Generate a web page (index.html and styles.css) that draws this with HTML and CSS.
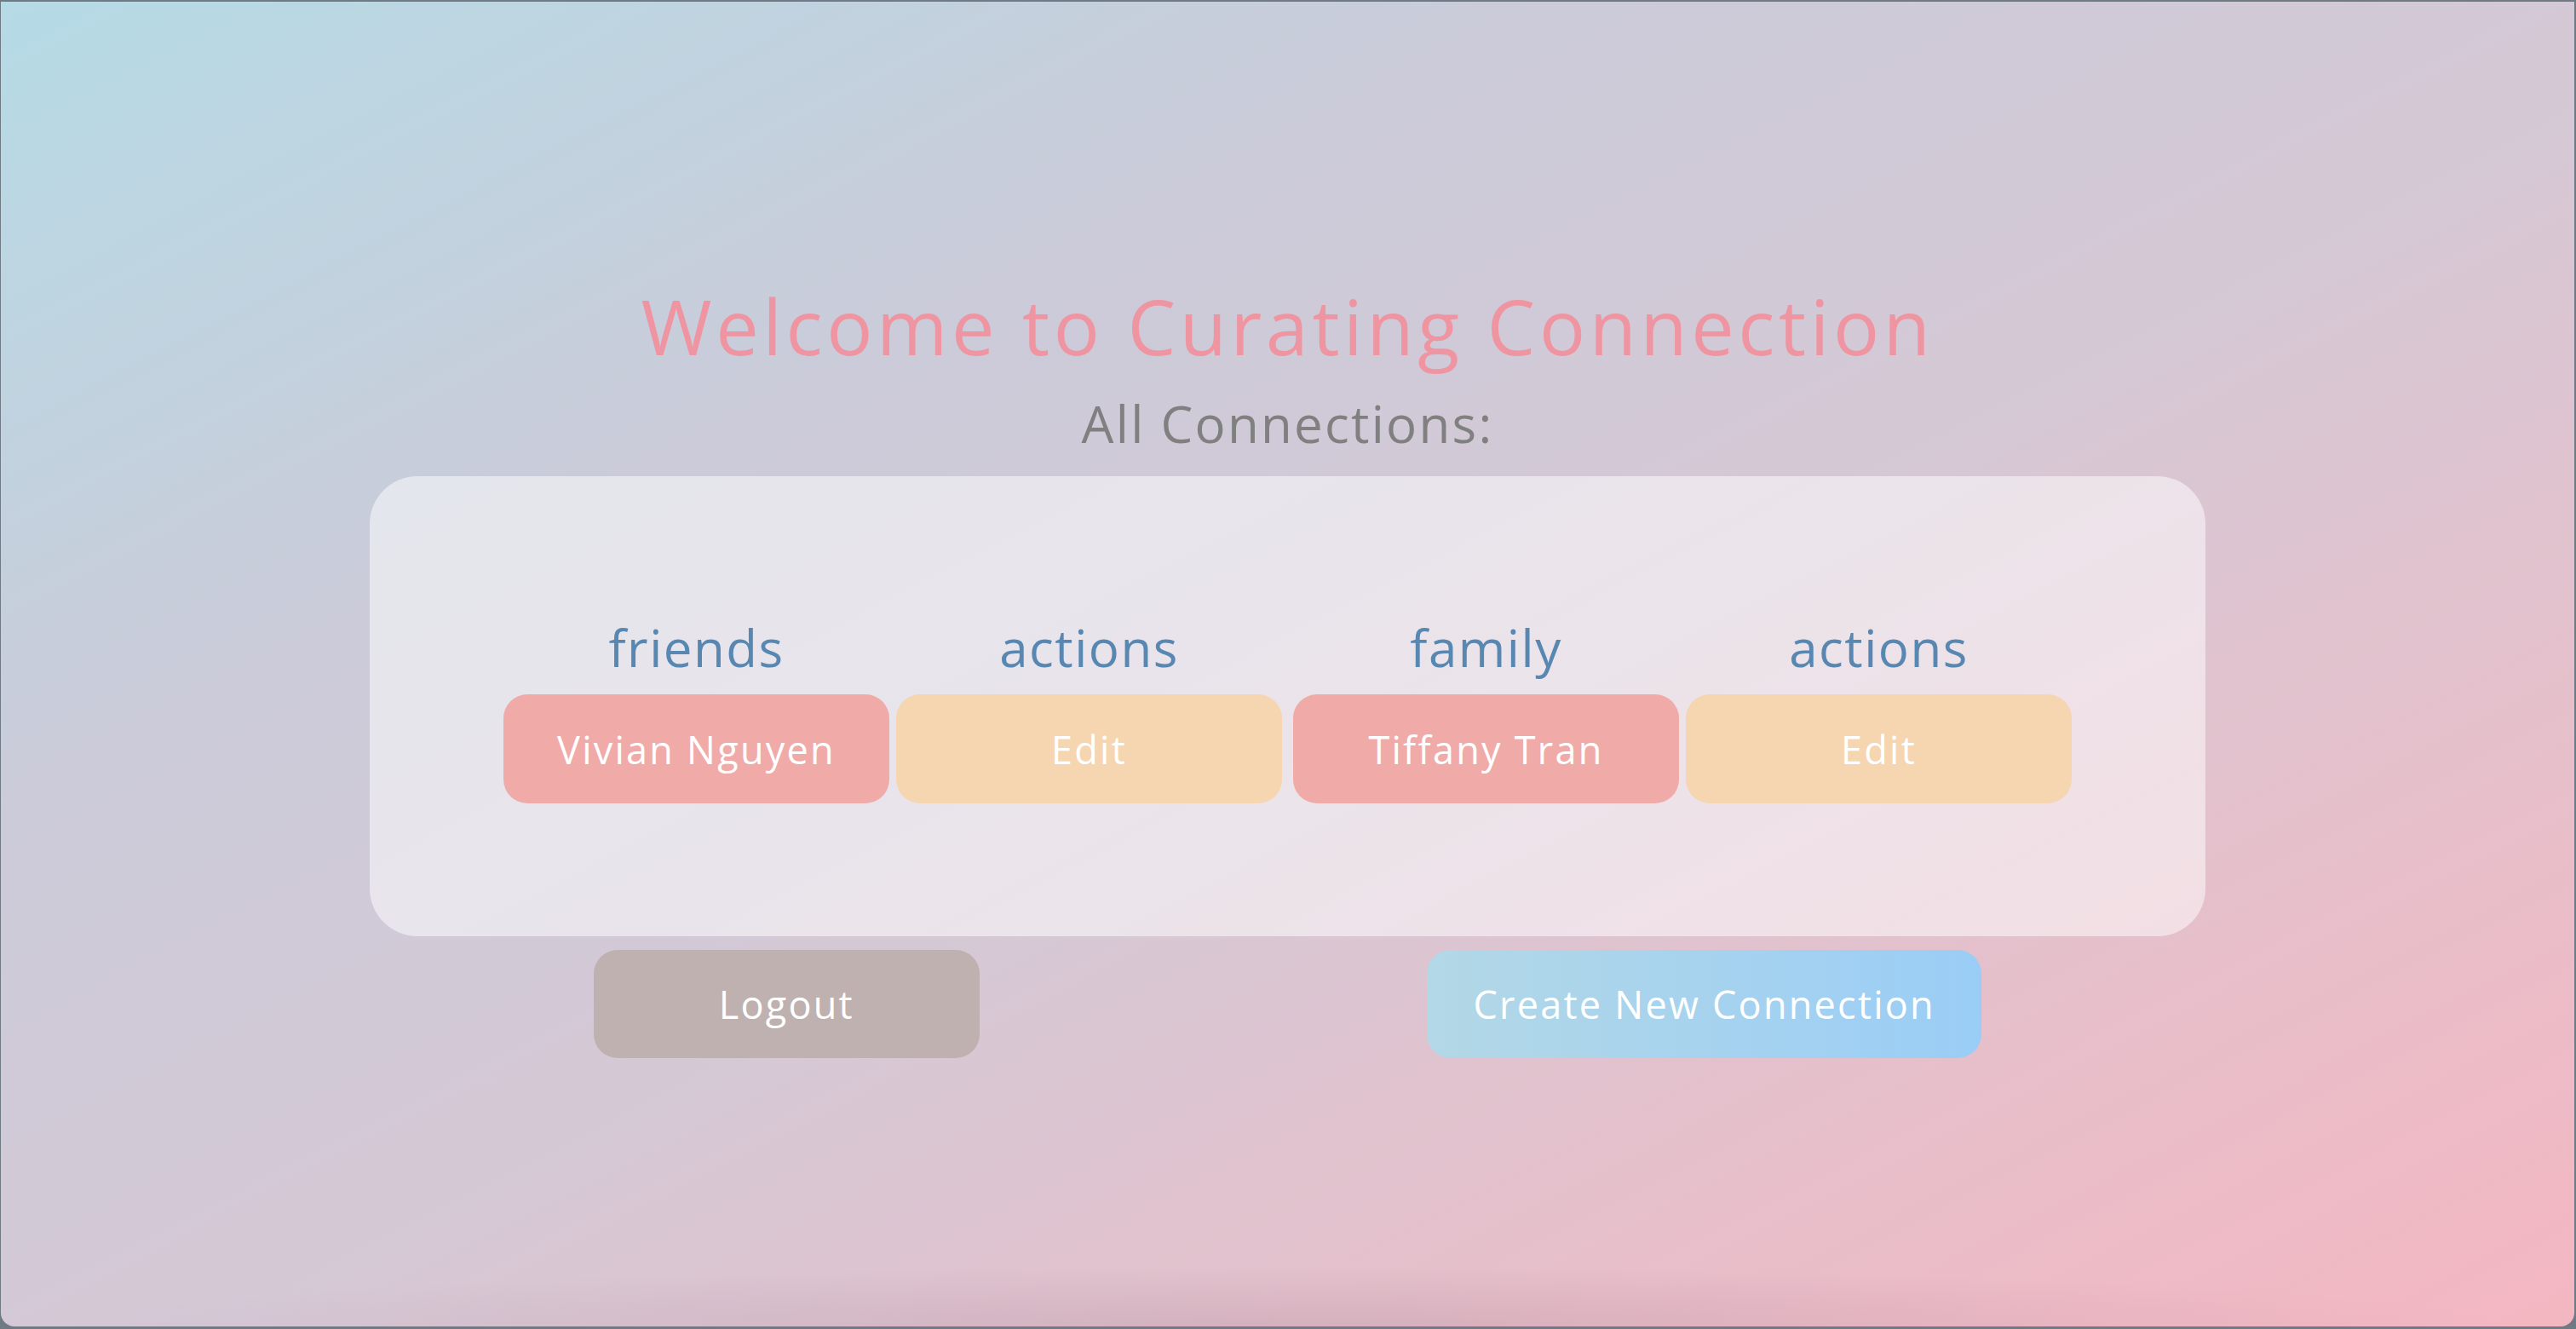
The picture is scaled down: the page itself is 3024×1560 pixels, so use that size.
FILE: index.html
```html
<!DOCTYPE html>
<html lang="en">
<head>
<meta charset="utf-8">
<title>Curating Connection</title>
<link rel="stylesheet" href="styles.css">
</head>
<body>
<div class="window">
  <main class="app">
    <h1 class="title">Welcome to Curating Connection</h1>
    <h2 class="subtitle">All Connections:</h2>
    <section class="card">
      <div class="tables">
        <div class="group">
          <div class="col-head">friends</div>
          <div class="col-head">actions</div>
          <button class="btn btn-name">Vivian Nguyen</button>
          <button class="btn btn-edit">Edit</button>
        </div>
        <div class="group">
          <div class="col-head">family</div>
          <div class="col-head">actions</div>
          <button class="btn btn-name">Tiffany Tran</button>
          <button class="btn btn-edit">Edit</button>
        </div>
      </div>
    </section>
    <div class="footer-actions">
      <button class="btn btn-logout">Logout</button>
      <button class="btn btn-create">Create New Connection</button>
    </div>
  </main>
</div>
</body>
</html>
```

FILE: styles.css
```css
* { box-sizing: border-box; }

html, body {
  margin: 0;
  padding: 0;
  height: 100%;
  background: #6f7a84;
}

body {
  font-family: "Open Sans", "Noto Sans", sans-serif;
  padding: 2px 2px 3px 1px;
}

.window {
  position: relative;
  height: 100%;
  border-radius: 0 0 16px 16px;
  overflow: hidden;
  background: linear-gradient(to bottom right, #b5dbe6 0%, #cbcbd9 30%, #d6c8d5 55%, #e6bfca 78%, #f4b7c2 100%);
}

.window::after {
  content: "";
  position: absolute;
  left: 0;
  right: 0;
  bottom: 0;
  height: 80px;
  background: radial-gradient(ellipse 48% 70px at 50% 100%, rgba(110, 70, 95, 0.13), rgba(110, 70, 95, 0) 100%);
  pointer-events: none;
}

.app {
  display: flex;
  flex-direction: column;
  align-items: center;
  padding-top: 330px;
}

.title {
  margin: 0;
  font-weight: 400;
  font-size: 90px;
  line-height: 100px;
  color: #ef95a2;
  letter-spacing: 0.051em;
}

.subtitle {
  margin: 30px 0 0;
  font-weight: 400;
  font-size: 60px;
  line-height: 70px;
  color: #808080;
  letter-spacing: 0.038em;
}

.card {
  margin-top: 27px;
  width: 2155px;
  height: 540px;
  border-radius: 56px;
  background: rgba(255, 255, 255, 0.5);
  padding-top: 166px;
  display: flex;
  justify-content: center;
}

.tables {
  display: flex;
  gap: 13px;
}

.group {
  display: grid;
  grid-template-columns: 453px 453px;
  grid-template-rows: 70px 128px;
  column-gap: 8px;
  row-gap: 20px;
}

.col-head {
  text-align: center;
  font-size: 60px;
  line-height: 70px;
  color: #5887b2;
  letter-spacing: 0.025em;
}

.btn {
  border: none;
  border-radius: 28px;
  font-family: inherit;
  font-size: 45px;
  letter-spacing: 0.05em;
  color: #ffffff;
  height: 128px;
  padding: 0;
  cursor: pointer;
}

.btn-name { background: #f0aba9; }
.btn-edit { background: #f5d6b0; }

.footer-actions {
  margin-top: 16px;
  width: 2155px;
  display: flex;
  justify-content: space-around;
}

.btn-logout {
  width: 453px;
  height: 127px;
  background: #beb1b0;
}

.btn-create {
  width: 651px;
  height: 127px;
  background: linear-gradient(to right, #b3d8e6, #9acdf6);
}
```
